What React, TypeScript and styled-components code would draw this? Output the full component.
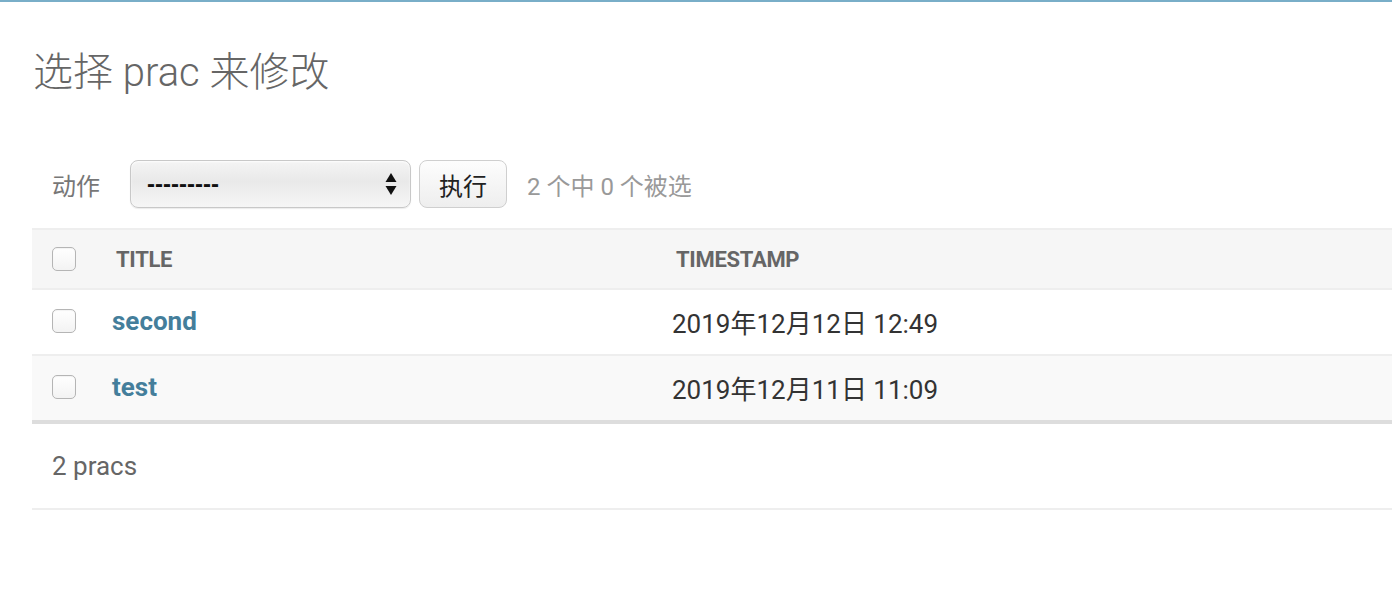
import styled, { createGlobalStyle } from "styled-components";

const GlobalStyle = createGlobalStyle`
  html, body {
    margin: 0;
    padding: 0;
    background: #fff;
  }
  body {
    font-family: Roboto, "Noto Sans CJK SC", "Liberation Sans", sans-serif;
    color: #333;
  }
`;

const rows = [
  { title: "second", timestamp: "2019年12月12日 12:49" },
  { title: "test", timestamp: "2019年12月11日 11:09" },
];

function App() {
  return (
    <>
      <GlobalStyle />
      <TopLine />
      <Content>
        <Title>选择 prac 来修改</Title>
        <Actions>
          <ActionLabel>动作</ActionLabel>
          <SelectBox>
            <span>---------</span>
            <svg width="12" height="24" viewBox="0 0 12 24">
              <path d="M6 1 L11.5 10 L0.5 10 Z" fill="#111" />
              <path d="M6 23 L11.5 14 L0.5 14 Z" fill="#111" />
            </svg>
          </SelectBox>
          <GoButton>执行</GoButton>
          <Counter>2 个中 0 个被选</Counter>
        </Actions>
        <Table>
          <colgroup>
            <col style={{ width: 64 }} />
            <col style={{ width: 560 }} />
            <col />
          </colgroup>
          <thead>
            <tr>
              <HeadCell>
                <CheckBox />
              </HeadCell>
              <HeadCell>TITLE</HeadCell>
              <HeadCell>TIMESTAMP</HeadCell>
            </tr>
          </thead>
          <tbody>
            {rows.map((row, i) => (
              <Row key={row.title} $alt={i % 2 === 1}>
                <Cell $check>
                  <CheckBox />
                </Cell>
                <Cell>
                  <TitleLink>{row.title}</TitleLink>
                </Cell>
                <Cell>{row.timestamp}</Cell>
              </Row>
            ))}
          </tbody>
        </Table>
        <Paginator>2 pracs</Paginator>
      </Content>
    </>
  );
}

export default App;

const TopLine = styled.div`
  height: 2px;
  background: #79aec8;
`;

const Content = styled.main`
  padding: 0 0 0 32px;
  display: flex;
  flex-direction: column;
`;

const Title = styled.h1`
  margin: 47px 0 0 1px;
  font-size: 40px;
  line-height: 48px;
  font-weight: 300;
  color: #666;
`;

const Actions = styled.div`
  display: flex;
  align-items: center;
  margin-top: 63px;
  padding-left: 20px;
  height: 48px;
  font-size: 24px;
`;

const ActionLabel = styled.span`
  color: #777;
  margin-right: 30px;
`;

const SelectBox = styled.div`
  box-sizing: border-box;
  width: 281px;
  height: 48px;
  display: flex;
  align-items: center;
  justify-content: space-between;
  padding: 0 13px 0 16px;
  border: 1px solid #c8c8c8;
  border-radius: 8px;
  background: linear-gradient(to bottom, #f4f4f4 0%, #e9e9e9 45%, #f6f6f6 100%);
  box-shadow: inset 0 1px 2px rgba(255, 255, 255, 0.9), 0 1px 1px rgba(0, 0, 0, 0.08);
  font-family: "Liberation Sans", sans-serif;
  font-size: 24px;
  font-weight: bold;
  color: #111;

  svg {
    display: block;
  }
`;

const GoButton = styled.button`
  box-sizing: border-box;
  width: 88px;
  height: 48px;
  margin-left: 8px;
  border: 1px solid #cfcfcf;
  border-radius: 8px;
  background: linear-gradient(to bottom, #fdfdfd 0%, #eeeeee 100%);
  font-family: "Noto Sans CJK SC", sans-serif;
  font-size: 24px;
  color: #222;
  padding: 0;
`;

const Counter = styled.span`
  margin-left: 20px;
  color: #999;
`;

const Table = styled.table`
  margin-top: 20px;
  width: 100%;
  border-collapse: collapse;
  table-layout: fixed;
  border-top: 2px solid #eee;
  border-bottom: 4px solid #ddd;
`;

const HeadCell = styled.th`
  height: 58px;
  padding: 0 0 0 20px;
  background: #f6f6f6;
  border-bottom: 2px solid #eee;
  text-align: left;
  vertical-align: middle;
  font-size: 22px;
  font-weight: 700;
  color: #666;
  letter-spacing: -0.3px;
`;

const Row = styled.tr<{ $alt: boolean }>`
  background: ${(p) => (p.$alt ? "#f9f9f9" : "#fff")};
  border-bottom: 2px solid #eee;
`;

const Cell = styled.td<{ $check?: boolean }>`
  height: 62px;
  padding: 0 0 2px ${(p) => (p.$check ? "20px" : "16px")};
  vertical-align: middle;
  font-size: 26px;
  color: #333;
`;

const CheckBox = styled.span`
  display: block;
  box-sizing: border-box;
  width: 24px;
  height: 24px;
  border: 1px solid #b5b5b5;
  border-radius: 5px;
  background: linear-gradient(to bottom, #ffffff 0%, #f3f3f3 100%);
  box-shadow: inset 0 1px 1px rgba(0, 0, 0, 0.05);
`;

const TitleLink = styled.a`
  color: #447e9b;
  font-weight: 700;
  text-decoration: none;
  cursor: pointer;
`;

const Paginator = styled.p`
  margin: 0;
  height: 84px;
  display: flex;
  align-items: center;
  padding-left: 20px;
  border-bottom: 2px solid #eee;
  font-size: 26px;
  color: #666;
`;
